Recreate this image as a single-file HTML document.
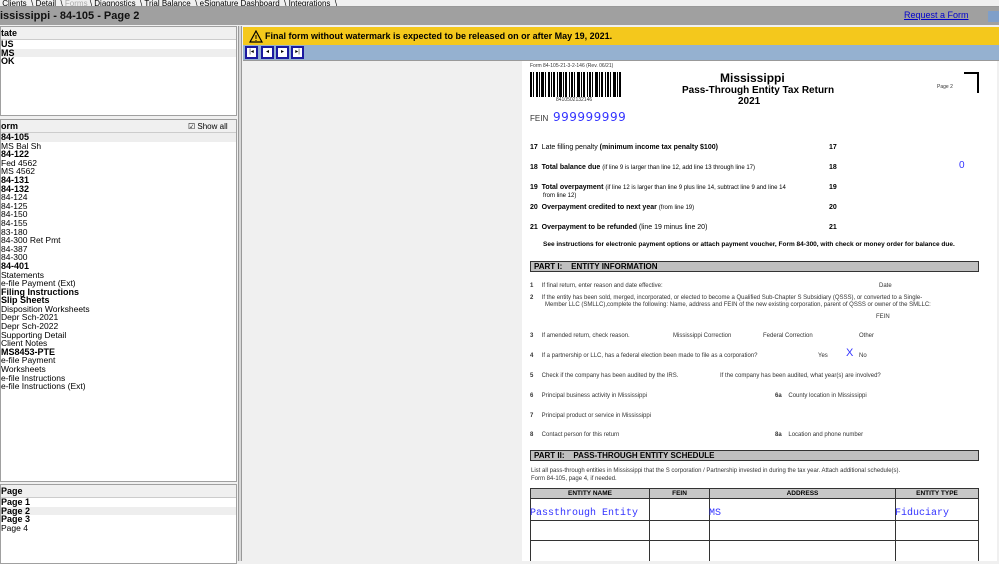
<!DOCTYPE html>
<html><head><meta charset="utf-8"><style>
*{margin:0;padding:0;box-sizing:border-box}
body{width:999px;height:561px;overflow:hidden;background:#f0f0f0;font-family:"Liberation Sans",sans-serif;position:relative;font-size:9px;color:#000}
.a{position:absolute;white-space:nowrap}
.tabs{position:absolute;left:0;top:0;width:999px;height:7px;background:#f0f0f0;border-bottom:1px solid #999;font-size:8px;line-height:7px;overflow:hidden}
.title{position:absolute;left:0;top:7px;width:999px;height:18px;background:#a0a0a0;font-weight:bold;font-size:11px;line-height:18px;color:#111}
.panel{position:absolute;left:0;background:#fff;border:1px solid #a0a0a0;width:237px;overflow:hidden}
.hdr{height:13px;background:#f0f0f0;border-bottom:1px solid #ccc;font-weight:bold;font-size:9px;line-height:13px}
.it{font-size:8.5px;line-height:8.6px;height:8.6px;overflow:visible}
.b{font-weight:bold;font-size:9px}
.f{font-size:6px;color:#333}
.n{font-weight:bold;font-size:7px}
.blue{color:#3333ff}
.hbar{position:absolute;left:530px;width:449px;height:11px;background:#c0c0c0;border:1px solid #333;font-weight:bold;font-size:8px;line-height:9px;padding-left:3px}
.nb{position:absolute;top:46px;width:13px;height:13px;background:#fff;border:2px solid #1a1aa0;font-size:6px;line-height:9px;text-align:center}
.mono{font-family:'Liberation Mono',monospace;font-size:10px}
</style></head><body>
<div class="tabs">&nbsp;Clients &nbsp;\ Detail &nbsp;\ <span style="color:#aaa">Forms</span> \ Diagnostics &nbsp;\ Trial Balance &nbsp;\ eSignature Dashboard &nbsp;\ Integrations &nbsp;\</div>
<div class="title">ississippi - 84-105 - Page 2</div>
<div class="a" style="left:904px;top:10px;font-size:9px;color:#00c;text-decoration:underline">Request a Form</div>
<div class="a" style="left:988px;top:11px;width:11px;height:11px;background:#7f9fc9"></div>

<div class="panel" style="top:26px;height:90px">
<div class="hdr">tate</div>
<div class="it b" style="line-height:8.5px">US</div><div class="it b" style="background:#eee">MS</div><div class="it b">OK</div>
</div>
<div class="panel" style="top:119px;height:363px">
<div class="hdr">orm<span style="position:absolute;left:187px;font-weight:normal;font-size:8px">&#9745; Show all</span></div>
<div class="it b" style="background:#eee">84-105</div>
<div class="it">MS Bal Sh</div><div class="it b">84-122</div><div class="it">Fed 4562</div><div class="it">MS 4562</div>
<div class="it b">84-131</div><div class="it b">84-132</div><div class="it">84-124</div><div class="it">84-125</div><div class="it">84-150</div><div class="it">84-155</div><div class="it">83-180</div><div class="it">84-300 Ret Pmt</div><div class="it">84-387</div><div class="it">84-300</div><div class="it b">84-401</div><div class="it">Statements</div><div class="it">e-file Payment (Ext)</div><div class="it b">Filing Instructions</div><div class="it b">Slip Sheets</div><div class="it">Disposition Worksheets</div><div class="it">Depr Sch-2021</div><div class="it">Depr Sch-2022</div><div class="it">Supporting Detail</div><div class="it">Client Notes</div><div class="it b">MS8453-PTE</div><div class="it">e-file Payment</div><div class="it">Worksheets</div><div class="it">e-file Instructions</div><div class="it">e-file Instructions (Ext)</div>
</div>
<div class="panel" style="top:484px;height:80px">
<div class="hdr">Page</div>
<div class="it b">Page 1</div><div class="it b" style="background:#eee">Page 2</div><div class="it b">Page 3</div><div class="it">Page 4</div>
</div>
<div class="a" style="left:238px;top:26px;width:4px;height:535px;background:#d8d8d8;border-left:1px solid #999;border-right:1px solid #999"></div>

<div class="a" style="left:243px;top:27px;width:756px;height:18px;background:#f4c81c;font-weight:bold;font-size:9px;line-height:18px;padding-left:22px">Final form without watermark is expected to be released on or after May 19, 2021.</div>
<svg class="a" style="left:249px;top:30px" width="14" height="13"><path d="M7 1L13 12H1Z" fill="none" stroke="#000" stroke-width="1.2"/><path d="M7 5v4M7 10v1" stroke="#000"/></svg>
<div class="a" style="left:243px;top:45px;width:756px;height:15px;background:#95b1d0"></div>
<div class="nb" style="left:245px">|◂</div>
<div class="nb" style="left:261px">◂</div>
<div class="nb" style="left:276px">▸</div>
<div class="nb" style="left:291px">▸|</div>
<div class="a" style="left:243px;top:60px;width:756px;height:1px;background:#999"></div>

<div class="a" style="left:522px;top:61px;width:475px;height:500px;background:#fff"></div>
<div class="a f" style="left:530px;top:63px;font-size:5px">Form 84-105-21-3-2-146 (Rev. 06/21)</div>
<svg class="a" style="left:530px;top:72px" width="93" height="25">
<g fill="#000">
<rect x="0" width="2" height="25"/><rect x="3" width="1" height="25"/><rect x="6" width="2" height="25"/><rect x="9" width="1" height="25"/><rect x="11" width="3" height="25"/><rect x="15" width="1" height="25"/><rect x="18" width="2" height="25"/><rect x="21" width="1" height="25"/><rect x="23" width="2" height="25"/><rect x="27" width="1" height="25"/><rect x="29" width="3" height="25"/><rect x="33" width="1" height="25"/><rect x="35" width="2" height="25"/><rect x="39" width="1" height="25"/><rect x="41" width="2" height="25"/><rect x="44" width="1" height="25"/><rect x="47" width="3" height="25"/><rect x="51" width="1" height="25"/><rect x="53" width="2" height="25"/><rect x="57" width="1" height="25"/><rect x="59" width="2" height="25"/><rect x="62" width="1" height="25"/><rect x="65" width="3" height="25"/><rect x="69" width="1" height="25"/><rect x="71" width="2" height="25"/><rect x="75" width="1" height="25"/><rect x="77" width="2" height="25"/><rect x="80" width="1" height="25"/><rect x="83" width="3" height="25"/><rect x="87" width="1" height="25"/><rect x="89" width="2" height="25"/>
</g></svg>
<div class="a f" style="left:556px;top:97px;font-size:5px">841050213214​6</div>
<div class="a" style="left:720px;top:71px;font-weight:bold;font-size:12px">Mississippi</div>
<div class="a" style="left:682px;top:85px;font-weight:bold;font-size:10px">Pass-Through Entity Tax Return</div>
<div class="a" style="left:738px;top:96px;font-weight:bold;font-size:10px">2021</div>
<div class="a f" style="left:937px;top:84px;font-size:5px">Page 2</div>
<div class="a" style="left:964px;top:72px;width:15px;height:21px;border-top:2px solid #000;border-right:2px solid #000"></div>
<div class="a" style="left:530px;top:114px;font-size:8px;color:#333">FEIN</div>
<div class="a blue" style="left:553px;top:110px;font-size:12px;font-family:'DejaVu Sans',sans-serif;letter-spacing:.5px">999999999</div>

<div class="a" style="left:530px;top:144px;font-size:7px"><b>17</b>&nbsp; Late filling penalty <b>(minimum income tax penalty $100)</b></div>
<div class="a n" style="left:829px;top:144px">17</div>
<div class="a" style="left:530px;top:164px;font-size:7px"><b>18&nbsp; Total balance due</b> <span style="font-size:6px">(if line 9 is larger than line 12, add line 13 through line 17)</span></div>
<div class="a n" style="left:829px;top:164px">18</div>
<div class="a blue" style="left:959px;top:160px;font-size:10px">0</div>
<div class="a" style="left:530px;top:184px;font-size:7px"><b>19&nbsp; Total overpayment</b> <span style="font-size:6px">(if line 12 is larger than line 9 plus line 14, subtract line 9 and line 14</span></div>
<div class="a" style="left:543px;top:193px;font-size:6px">from line 12)</div>
<div class="a n" style="left:829px;top:184px">19</div>
<div class="a" style="left:530px;top:204px;font-size:7px"><b>20&nbsp; Overpayment credited to next year</b> <span style="font-size:6px">(from line 19)</span></div>
<div class="a n" style="left:829px;top:204px">20</div>
<div class="a" style="left:530px;top:224px;font-size:7px"><b>21&nbsp; Overpayment to be refunded</b> (line 19 minus line 20)</div>
<div class="a n" style="left:829px;top:224px">21</div>
<div class="a" style="left:543px;top:241px;font-size:6.5px;font-weight:bold">See instructions for electronic payment options or attach payment voucher, Form 84-300, with check or money order for balance due.</div>

<div class="hbar" style="top:261px">PART I:&nbsp;&nbsp;&nbsp; ENTITY INFORMATION</div>
<div class="a f" style="left:530px;top:283px"><b>1</b>&nbsp;&nbsp;&nbsp;&nbsp; If final return, enter reason and date effective:</div>
<div class="a f" style="left:879px;top:283px">Date</div>
<div class="a f" style="left:530px;top:295px;line-height:7px"><b>2</b>&nbsp;&nbsp;&nbsp;&nbsp; If the entity has been sold, merged, incorporated, or elected to become a Qualified Sub-Chapter S Subsidiary (QSSS), or converted to a Single-<br>&nbsp;&nbsp;&nbsp;&nbsp;&nbsp;&nbsp;&nbsp;&nbsp; Member LLC (SMLLC),complete the following: Name, address and FEIN of the new existing corporation, parent of QSSS or owner of the SMLLC:</div>
<div class="a f" style="left:876px;top:314px">FEIN</div>
<div class="a f" style="left:530px;top:333px"><b>3</b>&nbsp;&nbsp;&nbsp;&nbsp; If amended return, check reason.</div>
<div class="a f" style="left:673px;top:333px">Mississippi Correction</div>
<div class="a f" style="left:763px;top:333px">Federal Correction</div>
<div class="a f" style="left:859px;top:333px">Other</div>
<div class="a f" style="left:530px;top:353px"><b>4</b>&nbsp;&nbsp;&nbsp;&nbsp; If a partnership or LLC, has a federal election been made to file as a corporation?</div>
<div class="a f" style="left:818px;top:353px">Yes</div>
<div class="a blue" style="left:846px;top:347px;font-size:11px">X</div>
<div class="a f" style="left:859px;top:353px">No</div>
<div class="a f" style="left:530px;top:373px"><b>5</b>&nbsp;&nbsp;&nbsp;&nbsp; Check if the company has been audited by the IRS.</div>
<div class="a f" style="left:720px;top:373px">If the company has been audited, what year(s) are involved?</div>
<div class="a f" style="left:530px;top:393px"><b>6</b>&nbsp;&nbsp;&nbsp;&nbsp; Principal business activity in Mississippi</div>
<div class="a f" style="left:775px;top:393px"><b>6a</b>&nbsp;&nbsp;&nbsp; County location in Mississippi</div>
<div class="a f" style="left:530px;top:413px"><b>7</b>&nbsp;&nbsp;&nbsp;&nbsp; Principal product or service in Mississippi</div>
<div class="a f" style="left:530px;top:432px"><b>8</b>&nbsp;&nbsp;&nbsp;&nbsp; Contact person for this return</div>
<div class="a f" style="left:775px;top:432px"><b>8a</b>&nbsp;&nbsp;&nbsp; Location and phone number</div>

<div class="hbar" style="top:450px">PART II:&nbsp;&nbsp;&nbsp; PASS-THROUGH ENTITY SCHEDULE</div>
<div class="a f" style="left:531px;top:467px;line-height:8px">List all pass-through entities in Mississippi that the S corporation / Partnership invested in during the tax year. Attach additional schedule(s).<br>Form 84-105, page 4, if needed.</div>

<div class="a" style="left:530px;top:488px;width:449px;height:73px;border:1px solid #333;border-bottom:none"></div>
<div class="a" style="left:531px;top:489px;width:447px;height:10px;background:#c8c8c8;border-bottom:1px solid #333"></div>
<div class="a" style="left:530px;top:520px;width:449px;height:1px;background:#333"></div>
<div class="a" style="left:530px;top:540px;width:449px;height:1px;background:#333"></div>
<div class="a" style="left:649px;top:488px;width:1px;height:73px;background:#333"></div>
<div class="a" style="left:709px;top:488px;width:1px;height:73px;background:#333"></div>
<div class="a" style="left:895px;top:488px;width:1px;height:73px;background:#333"></div>
<div class="a" style="left:531px;top:490px;width:118px;text-align:center;font-weight:bold;font-size:6.5px">ENTITY NAME</div>
<div class="a" style="left:650px;top:490px;width:59px;text-align:center;font-weight:bold;font-size:6.5px">FEIN</div>
<div class="a" style="left:710px;top:490px;width:185px;text-align:center;font-weight:bold;font-size:6.5px">ADDRESS</div>
<div class="a" style="left:896px;top:490px;width:82px;text-align:center;font-weight:bold;font-size:6.5px">ENTITY TYPE</div>
<div class="a blue mono" style="left:530px;top:508px">Passthrough Entity</div>
<div class="a blue mono" style="left:709px;top:508px">MS</div>
<div class="a blue mono" style="left:895px;top:508px">Fiduciary</div>
</body></html>
